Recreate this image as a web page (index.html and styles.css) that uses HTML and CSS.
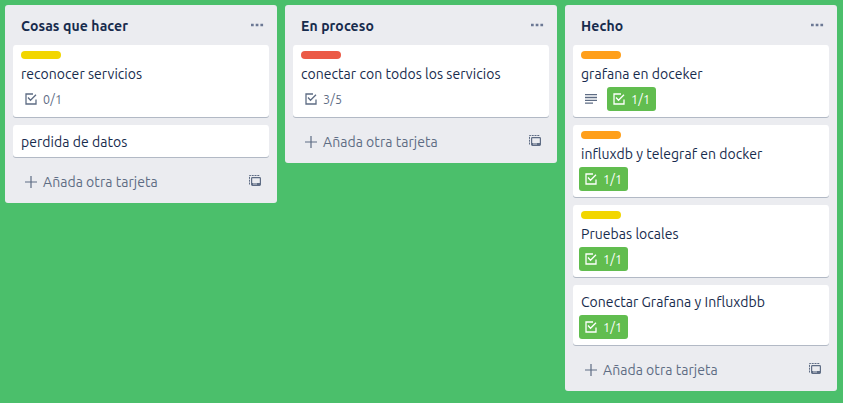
FILE: index.html
```html
<!DOCTYPE html>
<html lang="es">
<head>
<meta charset="utf-8">
<title>Tablero</title>
<link rel="stylesheet" href="styles.css">
</head>
<body>
<svg class="defs" aria-hidden="true">
  <symbol id="dots" viewBox="0 0 14 4"><path d="M1 .7h2.700v2.600H1zM5.700.7h2.700v2.600H5.700zM10.400.7h2.700v2.600h-2.700z" fill="currentColor"/></symbol>
  <symbol id="check" viewBox="0 0 12 12"><path d="M8 1H1v10h10V6.500M3 4.500 5.500 7.200 11 1.800" fill="none" stroke="currentColor" stroke-width="1.300"/></symbol>
  <symbol id="lines" viewBox="0 0 12 10"><path d="M0 .7h12M0 3.500h12M0 6.300h12M0 9.100h8" fill="none" stroke="currentColor" stroke-width="1.300"/></symbol>
  <symbol id="plus" viewBox="0 0 12 12"><path d="M6 0v12M0 6h12" fill="none" stroke="currentColor" stroke-width="1.200"/></symbol>
  <symbol id="template" viewBox="0 0 12 11"><path d="M.5 9.500V.5H11" fill="none" stroke="currentColor" stroke-dasharray="2 .8"/><rect x="2.600" y="2.600" width="8.800" height="7.800" rx=".8" fill="none" stroke="currentColor" stroke-width="1.200"/><path d="M3 8h8v2.300H3z" fill="currentColor"/><path d="M4 9h4" stroke="#ebecf0" stroke-width=".8"/></symbol>
</svg>
<main class="board">
  <section class="list">
    <header class="list-header"><h2>Cosas que hacer</h2><svg class="dots"><use href="#dots"/></svg></header>
    <article class="card">
      <span class="label yellow"></span>
      <p class="title">reconocer servicios</p>
      <div class="badges"><span class="badge"><svg class="check"><use href="#check"/></svg>0/1</span></div>
    </article>
    <article class="card"><p class="title plain">perdida de datos</p></article>
    <footer class="add"><svg class="plus"><use href="#plus"/></svg><span>Añada otra tarjeta</span><svg class="template"><use href="#template"/></svg></footer>
  </section>
  <section class="list">
    <header class="list-header"><h2>En proceso</h2><svg class="dots"><use href="#dots"/></svg></header>
    <article class="card">
      <span class="label red"></span>
      <p class="title">conectar con todos los servicios</p>
      <div class="badges"><span class="badge"><svg class="check"><use href="#check"/></svg>3/5</span></div>
    </article>
    <footer class="add"><svg class="plus"><use href="#plus"/></svg><span>Añada otra tarjeta</span><svg class="template"><use href="#template"/></svg></footer>
  </section>
  <section class="list">
    <header class="list-header"><h2>Hecho</h2><svg class="dots"><use href="#dots"/></svg></header>
    <article class="card">
      <span class="label orange"></span>
      <p class="title">grafana en doceker</p>
      <div class="badges"><span class="badge icon"><svg class="lines"><use href="#lines"/></svg></span><span class="badge done"><svg class="check"><use href="#check"/></svg>1/1</span></div>
    </article>
    <article class="card">
      <span class="label orange"></span>
      <p class="title">influxdb y telegraf en docker</p>
      <div class="badges"><span class="badge done"><svg class="check"><use href="#check"/></svg>1/1</span></div>
    </article>
    <article class="card">
      <span class="label yellow"></span>
      <p class="title">Pruebas locales</p>
      <div class="badges"><span class="badge done"><svg class="check"><use href="#check"/></svg>1/1</span></div>
    </article>
    <article class="card">
      <p class="title">Conectar Grafana y Influxdbb</p>
      <div class="badges"><span class="badge done"><svg class="check"><use href="#check"/></svg>1/1</span></div>
    </article>
    <footer class="add"><svg class="plus"><use href="#plus"/></svg><span>Añada otra tarjeta</span><svg class="template"><use href="#template"/></svg></footer>
  </section>
</main>
</body>
</html>
```
FILE: styles.css
```css
* { box-sizing: border-box; }
body {
  margin: 0;
  height: 403px;
  overflow: hidden;
  background: #4bbf6b;
  color: #172b4d;
  font: 14px/20px Ubuntu, "Noto Sans", sans-serif;
  letter-spacing: 0.04px;
}
svg { display: block; flex: none; }
.defs { position: absolute; width: 0; height: 0; }
.board { display: flex; align-items: flex-start; gap: 8px; padding: 5px; }
.list { flex: none; width: 272px; padding: 0 8px; background: #ebecf0; border-radius: 3px; }
.list-header { display: flex; justify-content: space-between; height: 40px; padding: 11px 5px 0 8px; }
.list-header h2 { margin: 0; font-size: 14px; font-weight: 700; letter-spacing: 0.1px; }
.dots { width: 14px; height: 4px; margin-top: 7px; color: #6b7894; }
.card {
  margin-bottom: 8px;
  padding: 6px 8px;
  background: #fff;
  border-radius: 3px;
  box-shadow: 0 1px 0 rgba(9, 30, 66, .25);
}
.label { display: block; width: 40px; height: 8px; margin-bottom: 4px; border-radius: 4px; }
.yellow { background: #f2d600; }
.red { background: #eb5a46; }
.orange { background: #ff9f1a; }
.title { height: 20px; margin: 0 0 4px; padding-top: 1px; white-space: nowrap; }
.plain { margin: 0; }
.badges { display: flex; gap: 4px; margin-left: -2px; }
.badge {
  display: flex;
  align-items: center;
  gap: 6px;
  height: 24px;
  padding: 0 6px;
  border-radius: 3px;
  color: #5e6c84;
  font-size: 12.5px;
  letter-spacing: 0.2px;
}
.icon { width: 24px; }
.done { width: 49px; background: #61bd4f; color: #fff; }
.check { width: 12px; height: 12px; }
.lines { width: 12px; height: 10px; }
.add { display: flex; align-items: center; height: 38px; padding: 0 8px 4px 12px; color: #5e6c84; }
.plus { width: 12px; height: 12px; margin-right: 6px; }
.template { width: 12px; height: 11px; margin: -3px 0 0 auto; }
```
